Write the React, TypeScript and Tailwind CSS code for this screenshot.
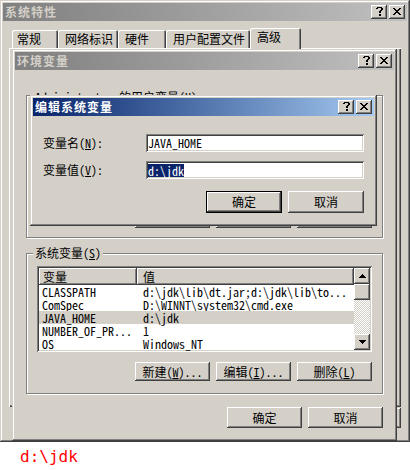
import type { ReactNode } from 'react';

const FACE = 'bg-[#d4d0c8]';
const RAISED =
  'shadow-[inset_-1px_-1px_#404040,inset_1px_1px_#ffffff,inset_-2px_-2px_#808080,inset_2px_2px_#d4d0c8]';
const FRAME =
  'shadow-[inset_-1px_-1px_#404040,inset_1px_1px_#d4d0c8,inset_-2px_-2px_#808080,inset_2px_2px_#ffffff]';
const SUNKEN =
  'shadow-[inset_1px_1px_#808080,inset_-1px_-1px_#ffffff,inset_2px_2px_#404040,inset_-2px_-2px_#d4d0c8]';

// pixel glyphs, Marlett-like
const HELP = ['.XXXXX.', 'XX...XX', '.....XX', '....XX.', '...XX..', '...XX..', '.......', '...XX..', '...XX..'];
const CLOSE = ['XX....XX', '.XX..XX.', '..XXXX..', '...XX...', '..XXXX..', '.XX..XX.', 'XX....XX'];
const UP = ['...X...', '..XXX..', '.XXXXX.', 'XXXXXXX'];
const DOWN = ['XXXXXXX', '.XXXXX.', '..XXX..', '...X...'];

function Pixels({ rows }: { rows: string[] }) {
  const w = rows[0].length;
  const h = rows.length;
  return (
    <svg width={w} height={h} viewBox={`0 0 ${w} ${h}`} shapeRendering="crispEdges">
      {rows.flatMap((r, y) =>
        r.split('').map((c, x) =>
          c === 'X' ? <rect key={`${x}-${y}`} x={x} y={y} width={1} height={1} fill="#000" /> : null,
        ),
      )}
    </svg>
  );
}

function CapBtn({ rows }: { rows: string[] }) {
  return (
    <div className={`flex h-[14px] w-[16px] items-center justify-center pb-[1px] ${FACE} ${RAISED}`}>
      <Pixels rows={rows} />
    </div>
  );
}

function TitleBar({ title, active = false }: { title: string; active?: boolean }) {
  return (
    <div
      className={`flex h-[18px] shrink-0 items-center justify-between px-[2px] ${
        active
          ? 'bg-linear-to-r from-[#0a246a] to-[#a6caf0] text-white'
          : 'bg-linear-to-r from-[#808080] to-[#c0c0c0] text-[#d4d0c8]'
      }`}
    >
      <span className="text-[12px] font-bold leading-[12px] tracking-[1px]">{title}</span>
      <div className="flex gap-[2px]">
        <CapBtn rows={HELP} />
        <CapBtn rows={CLOSE} />
      </div>
    </div>
  );
}

function Btn({
  children,
  className = '',
  isDefault = false,
}: {
  children?: ReactNode;
  className?: string;
  isDefault?: boolean;
}) {
  return (
    <button
      type="button"
      className={`flex items-center justify-center text-[12px] leading-[12px] text-black ${FACE} ${RAISED} ${
        isDefault ? 'border border-black' : ''
      } ${className}`}
    >
      {children}
    </button>
  );
}

function Group({
  label,
  labelClass = '-top-[7px]',
  className = '',
  children,
}: {
  label: ReactNode;
  labelClass?: string;
  className?: string;
  children?: ReactNode;
}) {
  return (
    <div className={`relative border border-[#808080] shadow-[inset_1px_1px_#ffffff,1px_1px_#ffffff] ${className}`}>
      <span className={`absolute left-[6px] px-[2px] leading-[12px] ${FACE} ${labelClass}`}>{label}</span>
      {children}
    </div>
  );
}

const tabs = [
  { label: '常规', cls: 'w-[46px] pl-[5px]' },
  { label: '网络标识', cls: 'w-[60px] pl-[7px]' },
  { label: '硬件', cls: 'w-[48px] pl-[7px]' },
  { label: '用户配置文件', cls: 'w-[84px] pl-[7px]' },
];

const sysVars = [
  { name: 'CLASSPATH', value: 'd:\\jdk\\lib\\dt.jar;d:\\jdk\\lib\\to...' },
  { name: 'ComSpec', value: 'D:\\WINNT\\system32\\cmd.exe' },
  { name: 'JAVA_HOME', value: 'd:\\jdk', selected: true },
  { name: 'NUMBER_OF_PR...', value: '1' },
  { name: 'OS', value: 'Windows_NT' },
];

function OuterWindow() {
  return (
    <div className={`absolute left-0 top-0 flex h-[442px] w-[410px] flex-col p-[3px] ${FACE} ${FRAME}`}>
      <TitleBar title="系统特性" />
      <div className="mx-[6px] mt-[7px] flex flex-col">
        <div className="flex h-[20px] items-end pl-[3px]">
          {tabs.map((t) => (
            <div
              key={t.label}
              className={`flex h-[18px] items-center rounded-t-[2px] shadow-[inset_1px_1px_#ffffff,inset_-1px_0_#404040,inset_-2px_0_#808080] ${FACE} ${t.cls}`}
            >
              {t.label}
            </div>
          ))}
          <div
            className={`relative z-10 -mb-[1px] flex h-[21px] w-[51px] items-start rounded-t-[2px] pl-[7px] pt-[3px] shadow-[inset_1px_1px_#ffffff,inset_-1px_0_#404040,inset_-2px_0_#808080] ${FACE}`}
          >
            高级
          </div>
        </div>
        <div className={`h-[359px] shadow-[inset_1px_1px_#ffffff,inset_-1px_-1px_#404040,inset_-2px_-2px_#808080] ${FACE}`} />
        {/* 确定 / 取消 / 应用 of the property sheet, all but an edge hidden under the child window */}
        <div className="mt-[1px] flex justify-end gap-[6px]">
          <Btn className="h-[20px] w-[75px]" />
          <Btn className="h-[20px] w-[75px]" />
          <Btn className="h-[20px] w-[75px]" />
        </div>
      </div>
    </div>
  );
}

function ListView() {
  return (
    <div className={`flex h-[86px] w-full bg-white p-[2px] ${SUNKEN}`}>
      <div className="flex flex-1 flex-col">
        <div className="flex h-[17px]">
          <div className={`flex w-[98px] items-center pl-[4px] ${FACE} ${RAISED}`}>变量</div>
          <div className={`flex flex-1 items-center pl-[6px] ${FACE} ${RAISED}`}>值</div>
        </div>
        {sysVars.map((v) => (
          <div
            key={v.name}
            className={`flex h-[13px] items-center whitespace-pre leading-[13px] ${v.selected ? 'bg-[#d4d0c8]' : ''}`}
          >
            <span className="w-[98px] pl-[3px]">{v.name}</span>
            <span className="pl-[6px]">{v.value}</span>
          </div>
        ))}
      </div>
      <div className="flex w-[16px] flex-col">
        <div className={`flex h-[16px] items-center justify-center ${FACE} ${RAISED}`}>
          <Pixels rows={UP} />
        </div>
        <div className={`h-[16px] ${FACE} ${RAISED}`} />
        <div className="flex-1 bg-[repeating-conic-gradient(#d4d0c8_0%_25%,#ffffff_0%_50%)] bg-[length:2px_2px]" />
        <div className={`flex h-[16px] items-center justify-center ${FACE} ${RAISED}`}>
          <Pixels rows={DOWN} />
        </div>
      </div>
    </div>
  );
}

function EnvWindow() {
  return (
    <div className={`absolute left-[12px] top-[49px] flex h-[392px] w-[385px] flex-col p-[3px] ${FACE} ${FRAME}`}>
      <TitleBar title="环境变量" />
      <div className="flex flex-col px-[11px]">
        <Group
          label={
            <>
              Administrator 的用户变量(<u>U</u>)
            </>
          }
          labelClass="-top-[5px]"
          className="mt-[25px] flex h-[143px] flex-col justify-end pb-[9px]"
        >
          {/* user-variable buttons, covered by the edit dialog */}
          <div className="flex justify-end gap-[6px] pr-[10px]">
            <Btn className="h-[19px] w-[75px]" />
            <Btn className="h-[19px] w-[75px]" />
            <Btn className="h-[19px] w-[75px]" />
          </div>
        </Group>
        <Group
          label={
            <>
              系统变量(<u>S</u>)
            </>
          }
          className="mt-[15px] h-[141px] px-[10px] pt-[12px]"
        >
          <ListView />
          <div className="mt-[10px] flex justify-end gap-[6px]">
            <Btn className="h-[19px] w-[75px]">
              新建(<u>W</u>)...
            </Btn>
            <Btn className="h-[19px] w-[75px]">
              编辑(<u>I</u>)...
            </Btn>
            <Btn className="h-[19px] w-[75px]">
              删除(<u>L</u>)
            </Btn>
          </div>
        </Group>
        <div className="mt-[13px] flex justify-end gap-[6px]">
          <Btn className="h-[21px] w-[75px]">确定</Btn>
          <Btn className="h-[21px] w-[75px]">取消</Btn>
        </div>
      </div>
    </div>
  );
}

function EditDialog() {
  return (
    <div className={`absolute left-[30px] top-[95px] flex h-[131px] w-[347px] flex-col p-[3px] ${FACE} ${FRAME}`}>
      <TitleBar title="编辑系统变量" active />
      <div className="flex flex-col px-[10px]">
        <div className="mt-[18px] flex h-[18px] items-center justify-between">
          <span>
            变量名(<u>N</u>):
          </span>
          <div className={`flex h-[18px] w-[218px] items-center bg-white px-[2px] ${SUNKEN}`}>JAVA_HOME</div>
        </div>
        <div className="mt-[9px] flex h-[18px] items-center justify-between">
          <span>
            变量值(<u>V</u>):
          </span>
          <div className={`flex h-[18px] w-[218px] items-center bg-white px-[2px] ${SUNKEN}`}>
            <span className="bg-[#0a246a] leading-[13px] text-white">{'d:\\jdk'}</span>
          </div>
        </div>
        <div className="mt-[12px] flex justify-end gap-[6px]">
          <Btn className="h-[22px] w-[76px]" isDefault>
            确定
          </Btn>
          <Btn className="h-[22px] w-[76px]">取消</Btn>
        </div>
      </div>
    </div>
  );
}

export default function App() {
  return (
    <div className="h-[470px] w-[410px] bg-white font-['Noto_Sans_Mono_CJK_SC','Noto_Sans_CJK_SC','Liberation_Mono',monospace] text-[12px] leading-[12px] text-black">
      <div className="relative h-[442px]">
        <OuterWindow />
        <EnvWindow />
        <EditDialog />
      </div>
      <div className="pl-[20px] pt-[7px] font-['DejaVu_Sans_Mono',monospace] text-[16px] leading-[16px] text-[#ff0000]">
        {'d:\\jdk'}
      </div>
    </div>
  );
}
